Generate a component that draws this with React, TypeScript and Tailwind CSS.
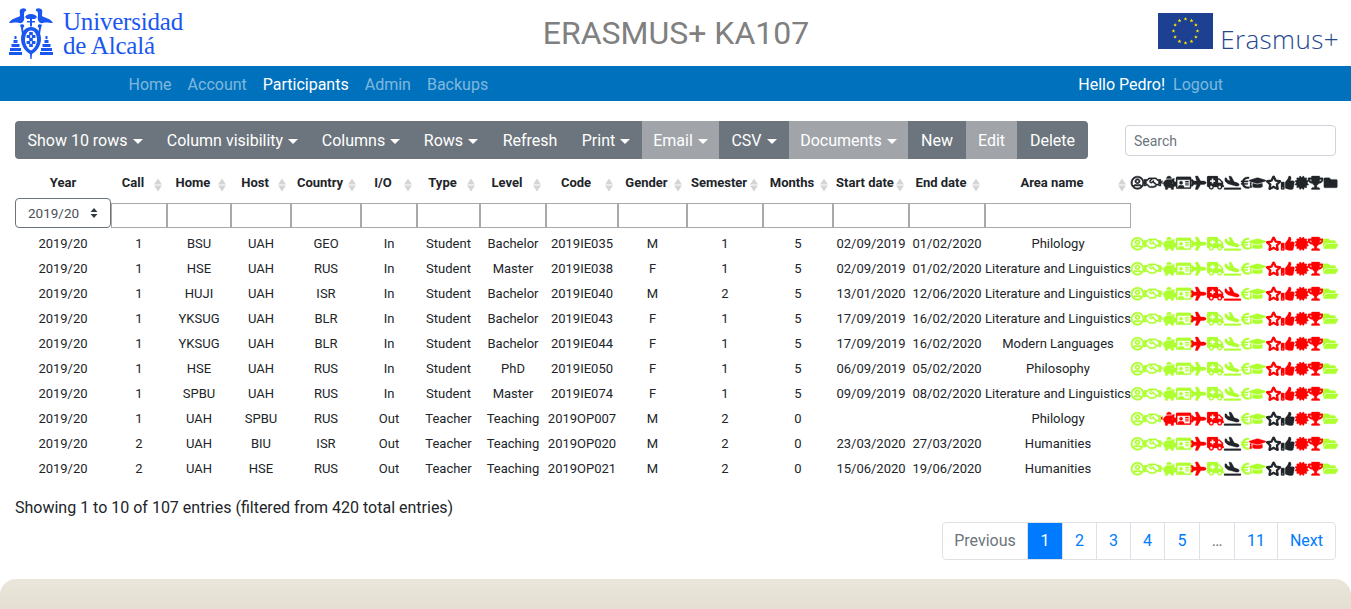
import type { IconType } from "react-icons";
import {
  FaAmbulance,
  FaCertificate,
  FaEuroSign,
  FaFolder,
  FaFolderOpen,
  FaGraduationCap,
  FaPiggyBank,
  FaPlane,
  FaPlaneArrival,
  FaRegHandshake,
  FaRegIdCard,
  FaRegStar,
  FaRegUserCircle,
  FaThumbsUp,
  FaTrophy,
} from "react-icons/fa";

// outlined icons get a heavier stroke, the reference renders them faux-bold
const statusIcons: [IconType, string][] = [
  [FaRegUserCircle, "w-[13px] [stroke-width:26]"],
  [FaRegHandshake, "w-[17px] [stroke-width:12]"],
  [FaPiggyBank, "w-[15.2px] [stroke-width:12]"],
  [FaRegIdCard, "w-[15.2px] [stroke-width:10]"],
  [FaPlane, "w-[15.2px] [stroke-width:14]"],
  [FaAmbulance, "w-[17px] [stroke-width:8]"],
  [FaPlaneArrival, "w-[17px] [stroke-width:12]"],
  [FaEuroSign, "w-[8.4px] [stroke-width:12]"],
  [FaGraduationCap, "w-[17px] [stroke-width:10]"],
  [FaRegStar, "w-[15.2px] [stroke-width:40]"],
  [FaThumbsUp, "w-[13.5px] [stroke-width:12]"],
  [FaCertificate, "w-[13.5px] [stroke-width:12]"],
  [FaTrophy, "w-[15.2px] [stroke-width:12]"],
  [FaFolderOpen, "w-[15.2px] [stroke-width:10]"],
];

const toneClass: Record<string, string> = {
  g: "text-[#adff2f]",
  r: "text-[#ff0000]",
  k: "text-[#212529]",
};

const columns = [
  { label: "Call", w: "w-[56px]" },
  { label: "Home", w: "w-[64px]" },
  { label: "Host", w: "w-[60px]" },
  { label: "Country", w: "w-[70px]" },
  { label: "I/O", w: "w-[56px]" },
  { label: "Type", w: "w-[63px]" },
  { label: "Level", w: "w-[66px]" },
  { label: "Code", w: "w-[72px]" },
  { label: "Gender", w: "w-[69px]" },
  { label: "Semester", w: "w-[76px]" },
  { label: "Months", w: "w-[70px]" },
  { label: "Start date", w: "w-[76px]" },
  { label: "End date", w: "w-[76px]" },
  { label: "Area name", w: "w-[146px]" },
];

const rows: [string[], string][] = [
  [["2019/20", "1", "BSU", "UAH", "GEO", "In", "Student", "Bachelor", "2019IE035", "M", "1", "5", "02/09/2019", "01/02/2020", "Philology"], "gggggggggrrrrg"],
  [["2019/20", "1", "HSE", "UAH", "RUS", "In", "Student", "Master", "2019IE038", "F", "1", "5", "02/09/2019", "01/02/2020", "Literature and Linguistics"], "gggggggggrrrrg"],
  [["2019/20", "1", "HUJI", "UAH", "ISR", "In", "Student", "Bachelor", "2019IE040", "M", "2", "5", "13/01/2020", "12/06/2020", "Literature and Linguistics"], "ggggrrrggrrrrg"],
  [["2019/20", "1", "YKSUG", "UAH", "BLR", "In", "Student", "Bachelor", "2019IE043", "F", "1", "5", "17/09/2019", "16/02/2020", "Literature and Linguistics"], "ggggrggggrrrrg"],
  [["2019/20", "1", "YKSUG", "UAH", "BLR", "In", "Student", "Bachelor", "2019IE044", "F", "1", "5", "17/09/2019", "16/02/2020", "Modern Languages"], "ggggrggggrrrrg"],
  [["2019/20", "1", "HSE", "UAH", "RUS", "In", "Student", "PhD", "2019IE050", "F", "1", "5", "06/09/2019", "05/02/2020", "Philosophy"], "gggggggggrrrrg"],
  [["2019/20", "1", "SPBU", "UAH", "RUS", "In", "Student", "Master", "2019IE074", "F", "1", "5", "09/09/2019", "08/02/2020", "Literature and Linguistics"], "gggggggggrrrrg"],
  [["2019/20", "1", "UAH", "SPBU", "RUS", "Out", "Teacher", "Teaching", "2019OP007", "M", "2", "0", "", "", "Philology"], "ggrrrrkggkkrrg"],
  [["2019/20", "2", "UAH", "BIU", "ISR", "Out", "Teacher", "Teaching", "2019OP020", "M", "2", "0", "23/03/2020", "27/03/2020", "Humanities"], "ggggrrkgrkkrrg"],
  [["2019/20", "2", "UAH", "HSE", "RUS", "Out", "Teacher", "Teaching", "2019OP021", "M", "2", "0", "15/06/2020", "19/06/2020", "Humanities"], "ggggrgkggkkrrg"],
];

const toolbar = [
  { label: "Show 10 rows", w: "w-[140px]", caret: true },
  { label: "Column visibility", w: "w-[155px]", caret: true },
  { label: "Columns", w: "w-[102px]", caret: true },
  { label: "Rows", w: "w-[78px]", caret: true },
  { label: "Refresh", w: "w-[80px]" },
  { label: "Print", w: "w-[72px]", caret: true },
  { label: "Email", w: "w-[77px]", caret: true, off: true },
  { label: "CSV", w: "w-[70px]", caret: true },
  { label: "Documents", w: "w-[119px]", caret: true, off: true },
  { label: "New", w: "w-[58px]" },
  { label: "Edit", w: "w-[51px]", off: true },
  { label: "Delete", w: "w-[71px]" },
];

const pages = [
  { label: "Previous", w: "w-[85px]", tone: "text-[#6c757d]" },
  { label: "1", w: "w-[35px]", tone: "text-white bg-[#007bff]" },
  { label: "2", w: "w-[34px]", tone: "text-[#007bff]" },
  { label: "3", w: "w-[34px]", tone: "text-[#007bff]" },
  { label: "4", w: "w-[34px]", tone: "text-[#007bff]" },
  { label: "5", w: "w-[35px]", tone: "text-[#007bff]" },
  { label: "…", w: "w-[35px]", tone: "text-[#6c757d]" },
  { label: "11", w: "w-[43px]", tone: "text-[#007bff]" },
  { label: "Next", w: "w-[57px]", tone: "text-[#007bff]" },
];

const Crest = () => (
  <svg viewBox="0 0 45 51" className="w-[45px] h-[51px] shrink-0" fill="#1a56f0">
    {/* birds */}
    <path d="M0 15 C3 10 8 10 11 8 C11 5 10 2 12 1 C15 -1 18 1 17 3 C15 3 15 5 15 8 C16 12 14 16 10 15 C7 14 4 15 0 15Z" />
    <path d="M44 15 C41 10 36 10 33 8 C33 5 34 2 32 1 C29 -1 26 1 27 3 C29 3 29 5 29 8 C28 12 30 16 34 15 C37 14 40 15 44 15Z" />
    <path d="M16 9 C18 5 26 5 28 9 L26 11 L18 11Z" />
    <path d="M21 11 h2 v2 h3 v1.5 h-3 v4 h-2 v-4 h-3 v-1.5 h3Z" />
    <path d="M11 17 C14 15 17 18 14 20 L15 26 L13 26 L12 20Z M33 17 C30 15 27 18 30 20 L29 26 L31 26 L32 20Z" />
    {/* shield */}
    <path
      fillRule="evenodd"
      d="M22 19 C28 19 32 24 32 31 C32 38 27 44 23 46 L22.6 51 H21.4 L21 46 C17 44 12 38 12 31 C12 24 16 19 22 19Z M22 22.5 C18 22.5 16 27 16 32 C16 37 19 41 22 42.5 C25 41 28 37 28 32 C28 27 26 22.5 22 22.5Z"
    />
    {[
      [20.2, 24], [17.6, 27], [22.8, 27], [20.2, 30], [17.6, 33], [22.8, 33], [20.2, 36],
    ].map(([x, y]) => (
      <rect key={`${x}-${y}`} x={x} y={y} width="3.6" height="3" />
    ))}
    {/* pyramids */}
    {[6.5, 37.5].map((cx) => (
      <g key={cx}>
        <rect x={cx - 1} y="28" width="2" height="3" />
        <rect x={cx - 2} y="32" width="4" height="3" />
        <rect x={cx - 4} y="36" width="8" height="3" />
        <rect x={cx - 5.5} y="40" width="11" height="3" />
        <rect x={cx - 6.5} y="44" width="13" height="3" />
      </g>
    ))}
  </svg>
);

const EuFlag = () => {
  const stars = Array.from({ length: 12 }, (_, i) => {
    const a = (i * Math.PI) / 6;
    return [27.5 + 12 * Math.sin(a), 18 - 12 * Math.cos(a)];
  });
  return (
    <svg viewBox="0 0 55 36" className="w-[55px] h-[36px] shrink-0">
      <rect width="55" height="36" fill="#1d4092" />
      {stars.map(([x, y], i) => (
        <path
          key={i}
          transform={`translate(${x} ${y}) scale(2)`}
          d="M0 -1 L.29 -.31 L.95 -.31 L.43 .12 L.59 .81 L0 .42 L-.59 .81 L-.43 .12 L-.95 -.31 L-.29 -.31Z"
          fill="#ffe500"
        />
      ))}
    </svg>
  );
};

const SortArrows = () => (
  <span className="absolute right-[5px] top-1/2 -translate-y-1/2 flex flex-col gap-[1px]">
    <span className="w-0 h-0 border-x-[4px] border-x-transparent border-b-[6px] border-b-[#d5d5d5]" />
    <span className="w-0 h-0 border-x-[4px] border-x-transparent border-t-[6px] border-t-[#d5d5d5]" />
  </span>
);

const Caret = () => (
  <span className="inline-block w-0 h-0 ml-[5px] align-[2px] border-x-[5px] border-x-transparent border-t-[5px] border-t-current" />
);

export default function App() {
  return (
    <div className="h-screen overflow-hidden flex flex-col bg-white text-[#212529] font-['Roboto',sans-serif]">
      {/* Header */}
      <header className="h-[66px] shrink-0 flex items-center justify-between px-[9px]">
        <div className="flex-1 flex items-center gap-[9px] pt-[1px]">
          <Crest />
          <div className="font-['Liberation_Serif',serif] text-[25px] leading-[24px] text-[#1a56f0] tracking-[-0.2px]">
            <div>Universidad</div>
            <div>de Alcalá</div>
          </div>
        </div>
        <h1 className="ml-[4px] text-[32px] text-[#808080] font-normal">ERASMUS+ KA107</h1>
        <div className="flex-1 self-stretch flex justify-end items-start gap-[7px] pt-[13px] pr-[3px]">
          <EuFlag />
          <span className="mt-[13px] font-['Open_Sans',sans-serif] font-light text-[26px] leading-[26px] text-[#24478f] tracking-[0.4px]">Erasmus+</span>
        </div>
      </header>

      {/* Nav */}
      <nav className="h-[35px] shrink-0 bg-[#0071bc] flex items-center justify-between pl-[120.5px] pr-[120px] pt-[2px] text-base">
        <div className="flex">
          <a className="px-2 text-white/50">Home</a>
          <a className="px-2 text-white/50">Account</a>
          <a className="px-2 text-white">Participants</a>
          <a className="px-2 text-white/50">Admin</a>
          <a className="px-2 text-white/50">Backups</a>
        </div>
        <div className="flex">
          <span className="text-white">Hello Pedro!</span>
          <a className="px-2 text-white/50">Logout</a>
        </div>
      </nav>

      {/* Content */}
      <main className="px-[15px] pt-[20px] grow">
        <div className="flex justify-between items-center">
          <div className="flex h-[38px] rounded overflow-hidden text-base text-white">
            {toolbar.map((b) => (
              <button
                key={b.label}
                className={`${b.w} pt-[1px] whitespace-nowrap ${b.off ? "bg-[#a1a5aa]" : "bg-[#6c757d]"}`}
              >
                {b.label}
                {b.caret && <Caret />}
              </button>
            ))}
          </div>
          <input
            placeholder="Search"
            className="w-[211px] h-[31px] px-2 pt-[1px] rounded border border-[#ced4da] text-sm placeholder:text-[#6c757d] outline-none"
          />
        </div>

        <table className="table-fixed border-collapse w-[1321px] mt-[12px] text-[13px]">
          <colgroup>
            <col className="w-[96px]" />
            {columns.map((c) => (
              <col key={c.label} className={c.w} />
            ))}
            <col className="w-[205px]" />
          </colgroup>
          <thead>
            <tr className="h-[27px]">
              <th className="font-bold pb-[3px]">Year</th>
              {columns.map((c) => (
                <th key={c.label} className="relative font-bold pr-[12px] pb-[3px] whitespace-nowrap">
                  {c.label}
                  <SortArrows />
                </th>
              ))}
              <th className="p-0 pb-[3px]">
                <div className="flex items-center text-[#212529]">
                  {statusIcons.map(([Icon, w], i) => {
                    const Glyph = i === 13 ? FaFolder : Icon;
                    return <Glyph key={i} className={`h-[13.5px] shrink-0 overflow-visible ${w}`} />;
                  })}
                </div>
              </th>
            </tr>
            <tr className="h-[33px]">
              <td className="p-0 align-top">
                <div className="h-[30px] rounded border border-[#6c757d] flex items-center justify-between pl-[12px] pr-[12px] text-[#495057] text-[13.5px]">
                  2019/20
                  <svg viewBox="0 0 8 10" className="w-[8px] h-[10px]" fill="#343a40">
                    <path d="M4 0 L7.5 4 H0.5Z M4 10 L0.5 6 H7.5Z" />
                  </svg>
                </div>
              </td>
              {columns.map((c) => (
                <td key={c.label} className="p-0 align-top pt-[5px]">
                  <input className="block w-full h-[25px] border border-[#a9a9a9] outline-none" />
                </td>
              ))}
              <td />
            </tr>
          </thead>
          <tbody>
            {rows.map(([cells, tones]) => (
              <tr key={cells[8]} className="h-[25px] text-center">
                {cells.map((cell, i) => (
                  <td key={i} className="p-0 whitespace-nowrap">
                    {cell}
                  </td>
                ))}
                <td className="p-0">
                  <div className="flex items-center">
                    {statusIcons.map(([Icon, w], i) => (
                      <Icon key={i} className={`h-[13.5px] shrink-0 overflow-visible ${w} ${toneClass[tones[i]]}`} />
                    ))}
                  </div>
                </td>
              </tr>
            ))}
          </tbody>
        </table>

        <p className="mt-[15px] text-base leading-6">Showing 1 to 10 of 107 entries (filtered from 420 total entries)</p>

        <div className="flex justify-end mt-[2px]">
          <div className="flex h-[38px] rounded border border-[#dee2e6] divide-x divide-[#dee2e6] overflow-hidden text-base">
            {pages.map((p) => (
              <a key={p.label} className={`flex items-center justify-center ${p.w} ${p.tone}`}>
                {p.label}
              </a>
            ))}
          </div>
        </div>
      </main>

      {/* Footer */}
      <footer className="h-[30px] shrink-0 rounded-t-2xl bg-gradient-to-b from-[#ebe6db] to-[#e4dfd2]" />
    </div>
  );
}
